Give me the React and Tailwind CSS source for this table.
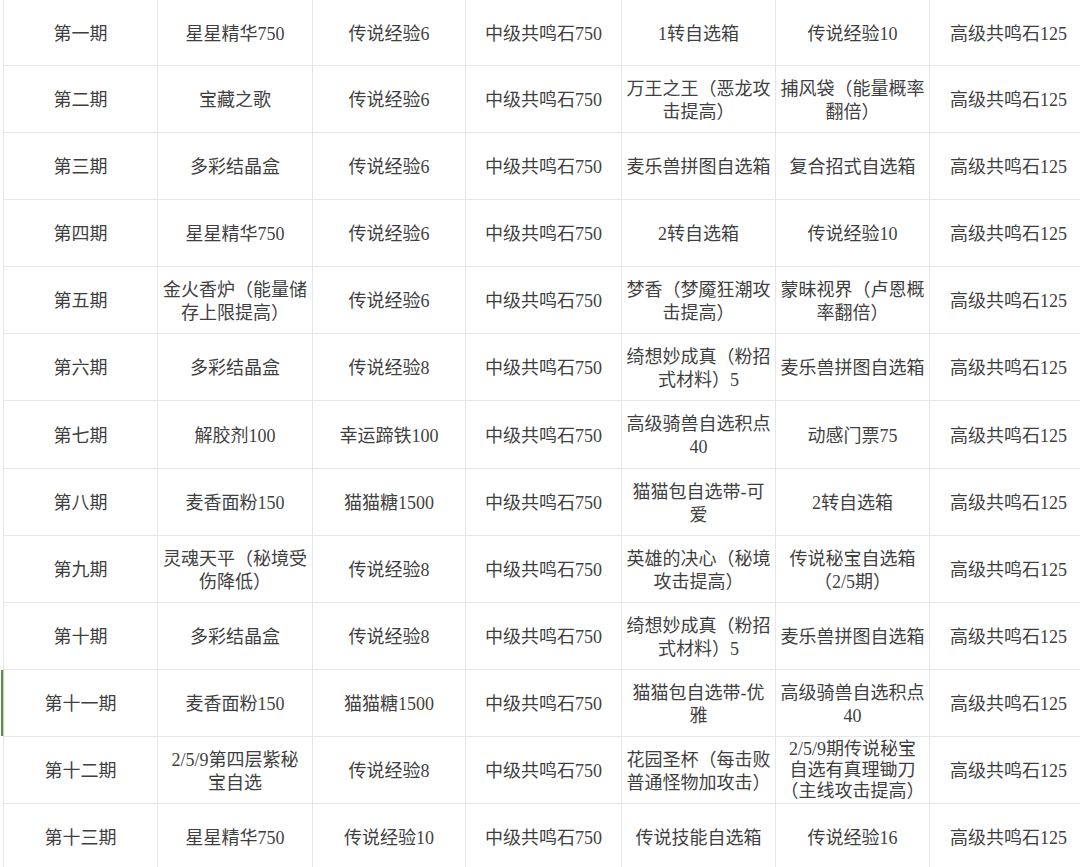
import React from 'react';

const ROWS = [
  ['第一期', '星星精华750', '传说经验6', '中级共鸣石750', '1转自选箱', '传说经验10', '高级共鸣石125'],
  ['第二期', '宝藏之歌', '传说经验6', '中级共鸣石750', '万王之王（恶龙攻\n击提高）', '捕风袋（能量概率\n翻倍）', '高级共鸣石125'],
  ['第三期', '多彩结晶盒', '传说经验6', '中级共鸣石750', '麦乐兽拼图自选箱', '复合招式自选箱', '高级共鸣石125'],
  ['第四期', '星星精华750', '传说经验6', '中级共鸣石750', '2转自选箱', '传说经验10', '高级共鸣石125'],
  ['第五期', '金火香炉（能量储\n存上限提高）', '传说经验6', '中级共鸣石750', '梦香（梦魇狂潮攻\n击提高）', '蒙昧视界（卢恩概\n率翻倍）', '高级共鸣石125'],
  ['第六期', '多彩结晶盒', '传说经验8', '中级共鸣石750', '绮想妙成真（粉招\n式材料）5', '麦乐兽拼图自选箱', '高级共鸣石125'],
  ['第七期', '解胶剂100', '幸运蹄铁100', '中级共鸣石750', '高级骑兽自选积点\n40', '动感门票75', '高级共鸣石125'],
  ['第八期', '麦香面粉150', '猫猫糖1500', '中级共鸣石750', '猫猫包自选带-可\n爱', '2转自选箱', '高级共鸣石125'],
  ['第九期', '灵魂天平（秘境受\n伤降低）', '传说经验8', '中级共鸣石750', '英雄的决心（秘境\n攻击提高）', '传说秘宝自选箱\n（2/5期）', '高级共鸣石125'],
  ['第十期', '多彩结晶盒', '传说经验8', '中级共鸣石750', '绮想妙成真（粉招\n式材料）5', '麦乐兽拼图自选箱', '高级共鸣石125'],
  ['第十一期', '麦香面粉150', '猫猫糖1500', '中级共鸣石750', '猫猫包自选带-优\n雅', '高级骑兽自选积点\n40', '高级共鸣石125'],
  ['第十二期', '2/5/9第四层紫秘\n宝自选', '传说经验8', '中级共鸣石750', '花园圣杯（每击败\n普通怪物加攻击）', '2/5/9期传说秘宝\n自选有真理锄刀\n（主线攻击提高）', '高级共鸣石125'],
  ['第十三期', '星星精华750', '传说经验10', '中级共鸣石750', '传说技能自选箱', '传说经验16', '高级共鸣石125'],
];

const WIDTHS = ['w-[154px]', 'w-[155px]', 'w-[153px]', 'w-[156px]', 'w-[154px]', 'w-[154px]', 'w-[158px]'];

// row heights picked to land the grid lines where the screenshot has them
const rowHeight = (r) => (r === 0 ? 'h-[65px]' : r === 6 ? 'h-[68px]' : 'h-[67px]');

export default function App() {
  return (
    <div
      className="w-[1080px] h-[867px] overflow-hidden bg-white text-[#3f3f3f] text-[18px]"
      style={{ fontFamily: '"Liberation Serif", "Noto Sans CJK SC", serif' }}
    >
      <table className="ml-[3px] table-fixed border-collapse w-[1084px]">
        <colgroup>
          {WIDTHS.map((w, i) => <col key={i} className={w} />)}
        </colgroup>
        <tbody>
          {ROWS.map((row, r) => (
            <tr key={r} className={rowHeight(r)}>
              {row.map((cell, c) => {
                const tall = cell.split('\n').length > 2;
                return (
                  <td
                    key={c}
                    className={
                      'relative border border-[#e6e6e6] text-center align-middle px-1 pb-0 whitespace-pre-line ' +
                      (r === 0 ? 'border-t-0 ' : '') +
                      (tall ? 'pt-[2px] leading-[21px] ' : 'pt-[4px] leading-[23px] ')
                    }
                  >
                    {r === 10 && c === 0 && (
                      <span className="absolute -left-[3px] top-0 bottom-0 w-[3px] bg-[#5f8a4e] border-r border-[#b9dca8]" />
                    )}
                    {cell}
                  </td>
                );
              })}
            </tr>
          ))}
        </tbody>
      </table>
    </div>
  );
}
